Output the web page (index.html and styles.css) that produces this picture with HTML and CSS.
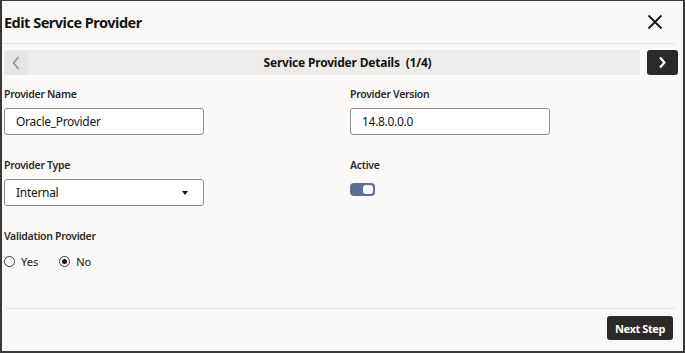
FILE: index.html
```html
<!DOCTYPE html>
<html>
<head>
<meta charset="utf-8">
<link rel="stylesheet" href="styles.css">
</head>
<body>
<div class="dialog">
  <div class="header">
    <h1 class="title">Edit Service Provider</h1>
    <button class="close" aria-label="Close">
      <svg width="16" height="16" viewBox="0 0 16 16"><path d="M1.5 1.5 L14.5 14.5 M14.5 1.5 L1.5 14.5" stroke="#161513" stroke-width="1.8" fill="none"/></svg>
    </button>
  </div>
  <div class="stepbar">
    <div class="steptrack">
      <button class="prev" aria-label="Previous">
        <svg width="8" height="14" viewBox="0 0 8 14"><path d="M6.5 1 L1.5 7 L6.5 13" stroke="#8c8b89" stroke-width="1.3" fill="none"/></svg>
      </button>
      <div class="steptitle">Service Provider Details&nbsp; (1/4)</div>
    </div>
    <button class="next" aria-label="Next">
      <svg width="9" height="13" viewBox="0 0 9 13"><path d="M2 1.5 L6.5 6.5 L2 11.5" stroke="#fff" stroke-width="2.2" fill="none"/></svg>
    </button>
  </div>
  <div class="form">
    <div class="field">
      <div class="label">Provider Name</div>
      <div class="input">Oracle_Provider</div>
    </div>
    <div class="field">
      <div class="label">Provider Version</div>
      <div class="input">14.8.0.0.0</div>
    </div>
    <div class="field">
      <div class="label">Provider Type</div>
      <div class="input select"><span>Internal</span><span class="caret"></span></div>
    </div>
    <div class="field">
      <div class="label">Active</div>
      <div class="toggle"><span class="knob"></span></div>
    </div>
    <div class="field">
      <div class="label">Validation Provider</div>
      <div class="radios">
        <label class="radio"><span class="circle"></span>Yes</label>
        <label class="radio"><span class="circle on"></span>No</label>
      </div>
    </div>
  </div>
  <div class="footer">
    <button class="nextstep">Next Step</button>
  </div>
</div>
</body>
</html>
```
FILE: styles.css
```css
* { box-sizing: border-box; }
html, body { margin: 0; padding: 0; }
body {
  width: 685px;
  height: 353px;
  font-family: "Noto Sans", "Open Sans", sans-serif;
  color: #161513;
  background: #fbf9f8;
}
.dialog {
  width: 685px;
  height: 353px;
  border: 1px solid #3a3938;
  border-left-width: 2px;
  border-right-width: 2px;
  border-bottom-width: 2px;
  background: #fbf9f8;
  display: flex;
  flex-direction: column;
  padding: 0 8px 0 2px;
}
.header {
  height: 43px;
  display: flex;
  align-items: center;
  justify-content: space-between;
  border-bottom: 1px solid #e3e1de;
}
.title {
  margin: 0;
  font-size: 14.5px;
  font-weight: 700;
  letter-spacing: -0.5px;
}
.close {
  background: none;
  border: 0;
  padding: 0;
  margin-right: 12px;
  width: 16px;
  height: 16px;
  display: flex;
}
.stepbar {
  display: flex;
  gap: 7px;
  margin-top: 6px;
  margin-right: -3px;
  height: 25px;
}
.steptrack {
  flex: 1;
  background: #edecea;
  display: flex;
  align-items: center;
}
.prev {
  width: 24px;
  height: 25px;
  background: #e6e5e3;
  border: 0;
  border-radius: 3px;
  display: flex;
  align-items: center;
  justify-content: center;
  padding: 0;
}
.steptitle {
  flex: 1;
  text-align: center;
  font-size: 12px;
  font-weight: 700;
  letter-spacing: -0.2px;
  margin-left: 27px;
}
.next {
  width: 31px;
  height: 25px;
  background: #2b2a28;
  border: 0;
  border-radius: 3px;
  display: flex;
  align-items: center;
  justify-content: center;
  padding: 0;
}
.form {
  display: grid;
  grid-template-columns: 346px 1fr;
  align-content: start;
  row-gap: 23px;
  padding-top: 12px;
  flex: 1;
}
.label {
  font-size: 10.5px;
  font-weight: 600;
  letter-spacing: -0.3px;
  color: #2c2b29;
  height: 14px;
  margin-bottom: 7px;
}
.input {
  width: 200px;
  height: 27px;
  border: 1px solid #8f8d8a;
  border-radius: 3px;
  background: #fff;
  font-size: 12px;
  letter-spacing: -0.3px;
  padding: 0 11px;
  display: flex;
  align-items: center;
}
.select { justify-content: space-between; padding-right: 15px; }
.caret {
  width: 0; height: 0;
  border-left: 3.5px solid transparent;
  border-right: 3.5px solid transparent;
  border-top: 4px solid #161513;
}
.toggle {
  margin-top: 11px;
  width: 25px;
  height: 13px;
  border-radius: 4px;
  background: #5f6f93;
  position: relative;
}
.knob {
  position: absolute;
  right: 2px;
  top: 2px;
  width: 10px;
  height: 9px;
  border-radius: 3px;
  background: #fff;
}
.radios {
  display: flex;
  gap: 21px;
  margin-top: 11px;
}
.radio {
  display: flex;
  align-items: center;
  gap: 6px;
  font-size: 11px;
}
.circle {
  width: 11px;
  height: 11px;
  border-radius: 50%;
  border: 1px solid #3a3938;
  background: #fff;
  position: relative;
}
.circle.on::after {
  content: "";
  position: absolute;
  left: 2px; top: 2px;
  width: 5px; height: 5px;
  border-radius: 50%;
  background: #161513;
}
.footer {
  border-top: 1px solid #e3e1de;
  height: 43px;
  display: flex;
  justify-content: flex-end;
  align-items: flex-start;
  padding-top: 7px;
  margin-left: 2px;
}
.nextstep {
  width: 66px;
  height: 24px;
  background: #2b2a28;
  color: #fff;
  border: 0;
  border-radius: 3px;
  font-family: "Noto Sans", sans-serif;
  font-size: 11px;
  font-weight: 700;
  letter-spacing: -0.4px;
  margin-right: 2px;
}
```
